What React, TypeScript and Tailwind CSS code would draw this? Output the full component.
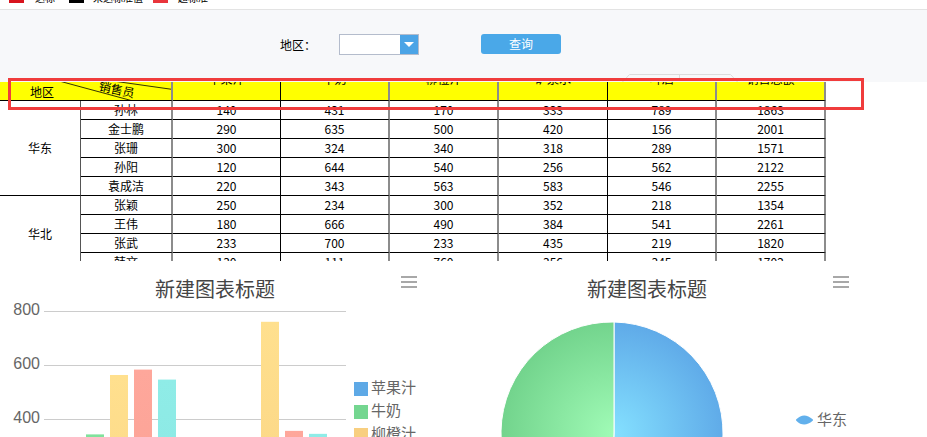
import React from 'react';

const products = ['苹果汁', '牛奶', '柳橙汁', '矿泉水', '啤酒', '销售总额'];

const east = [
    ['孙林', 140, 431, 170, 333, 789, 1863],
    ['金士鹏', 290, 635, 500, 420, 156, 2001],
    ['张珊', 300, 324, 340, 318, 289, 1571],
    ['孙阳', 120, 644, 540, 256, 562, 2122],
    ['袁成洁', 220, 343, 563, 583, 546, 2255],
];
const north = [
    ['张颖', 250, 234, 300, 352, 218, 1354],
    ['王伟', 180, 666, 490, 384, 541, 2261],
    ['张武', 233, 700, 233, 435, 219, 1820],
    ['韩文', 130, 111, 760, 356, 345, 1702],
];

// right border per column (the scaled report draws some lines grey, some black)
const colBorder = [
    'border-r border-r-[#555]',
    'border-r-2 border-r-[#8c8c8c]',
    'border-r border-r-black',
    'border-r-2 border-r-[#8c8c8c]',
    'border-r-2 border-r-[#8c8c8c]',
    'border-r border-r-black',
    'border-r-2 border-r-[#8c8c8c]',
    'border-r-2 border-r-[#8c8c8c]',
];

const BodyRows: React.FC<{ region: string; rows: (string | number)[][] }> = ({ region, rows }) => (
    <>
        {rows.map((r, i) => (
            <React.Fragment key={String(r[0])}>
                {i === 0 && (
                    <div
                        className={`flex items-center justify-center border-b border-b-black ${colBorder[0]}`}
                        style={{ gridRow: `span ${rows.length} / span ${rows.length}` }}
                    >
                        {region}
                    </div>
                )}
                {r.map((v, j) => (
                    <div key={j} className={`h-[19px] flex items-center justify-center border-b border-b-black ${colBorder[j + 1]}`}>
                        {v}
                    </div>
                ))}
            </React.Fragment>
        ))}
    </>
);

const MenuIcon: React.FC<{ x: number }> = ({ x }) => (
    <g stroke="#a8a8a8" strokeWidth={2}>
        <line x1={x} y1={15} x2={x + 16} y2={15} />
        <line x1={x} y1={20} x2={x + 16} y2={20} />
        <line x1={x} y1={25} x2={x + 16} y2={25} />
    </g>
);

const seriesColors = [
    ['#68b6f0', '#5ea9e6'],
    ['#80e29c', '#74d690'],
    ['#ffe08e', '#f8cf80'],
    ['#fea79b', '#f99d90'],
    ['#8fece7', '#86e2de'],
];

const BarChart = () => {
    const cats = [
        [220, 343, 563, 583, 546],
        [130, 111, 760, 356, 345],
    ];
    const y = (v: number) => 157 - (v - 400) * 0.27;
    return (
        <svg width={463} height={176} className="shrink-0" fontFamily="'Noto Sans CJK SC', sans-serif">
            <defs>
                {seriesColors.map((c, i) => (
                    <linearGradient key={i} id={`bar${i}`} x1="0" y1="0" x2="0" y2="1">
                        <stop offset="0" stopColor={c[0]} />
                        <stop offset="1" stopColor={c[1]} />
                    </linearGradient>
                ))}
            </defs>
            <text x={215} y={35} textAnchor="middle" fontSize={20} fill="#444">新建图表标题</text>
            <MenuIcon x={401} />
            {[49, 103, 157].map(g => (
                <line key={g} x1={44} x2={346} y1={g + 0.5} y2={g + 0.5} stroke="#cccccc" />
            ))}
            {[['800', 49], ['600', 103], ['400', 157]].map(([t, g]) => (
                <text key={t} x={40} y={Number(g) + 4} textAnchor="end" fontSize={16} fill="#666" fontFamily="'Liberation Sans', sans-serif">{t}</text>
            ))}
            {cats.map((vals, c) =>
                vals.map((v, s) => (
                    <rect key={`${c}-${s}`} x={62 + 151 * c + 24 * s} y={y(v)} width={18} height={300} fill={`url(#bar${s})`} />
                ))
            )}
            {['苹果汁', '牛奶', '柳橙汁'].map((t, i) => (
                <g key={t}>
                    <rect x={354} y={120 + 23 * i} width={14} height={14} fill={seriesColors[i][1]} />
                    <text x={371} y={131 + 23 * i} fontSize={15} fill="#666">{t}</text>
                </g>
            ))}
        </svg>
    );
};

const PieChart = () => (
    <svg width={464} height={176} className="shrink-0" fontFamily="'Noto Sans CJK SC', sans-serif">
        <defs>
            <radialGradient id="pieBlue" cx={151} cy={171} r={111} gradientUnits="userSpaceOnUse">
                <stop offset="0" stopColor="#84e0ff" />
                <stop offset="1" stopColor="#5faae8" />
            </radialGradient>
            <radialGradient id="pieGreen" cx={151} cy={171} r={111} gradientUnits="userSpaceOnUse">
                <stop offset="0" stopColor="#a0fbb6" />
                <stop offset="1" stopColor="#73d48d" />
            </radialGradient>
        </defs>
        <text x={184} y={35} textAnchor="middle" fontSize={20} fill="#444">新建图表标题</text>
        <MenuIcon x={370} />
        <path d="M151,171 L151,60 A111,111 0 1 1 147,282 Z" fill="url(#pieBlue)" stroke="#fff" strokeWidth={1} />
        <path d="M151,171 L147,282 A111,111 0 0 1 151,60 Z" fill="url(#pieGreen)" stroke="#fff" strokeWidth={1} />
        <path d="M334,158 Q341,151 349,158 Q341,165 334,158 Z" fill="#62b0ec" stroke="#62b0ec" strokeWidth={2} strokeLinejoin="round" />
        <text x={354} y={163} fontSize={15} fill="#666">华东</text>
    </svg>
);

export default function App() {
    return (
        <div className="relative w-[927px] h-[437px] overflow-hidden bg-white text-black font-['Noto_Sans_CJK_SC','Liberation_Sans',sans-serif]">
            {/* legend strip, mostly scrolled out of view */}
            <div className="h-[10px] overflow-hidden border-b border-b-[#e3e3e3] bg-white">
                <div className="flex items-center -mt-[8px] pl-[9px] text-[10px] leading-[11px]">
                    <div className="flex items-center w-[60px]">
                        <span className="w-[15px] h-[11px] bg-[#d8141e]" />
                        <span className="ml-[11px]">达标</span>
                    </div>
                    <div className="flex items-center w-[84px]">
                        <span className="w-[15px] h-[11px] bg-black" />
                        <span className="ml-[9px]">未达标准值</span>
                    </div>
                    <div className="flex items-center">
                        <span className="w-[15px] h-[11px] bg-[#e9353c]" />
                        <span className="ml-[10px]">超标准</span>
                    </div>
                </div>
            </div>

            {/* filter panel */}
            <div className="relative z-10 h-[72px] bg-[#f7f8fa] pt-[24px] pl-[280px] flex items-start text-[12px]">
                <span className="h-[21px] leading-[21px] w-[36px]">地区：</span>
                <div className="ml-[23px] w-[80px] h-[21px] flex border border-[#b4bccc] bg-white">
                    <div className="flex-1" />
                    <div className="w-[18px] bg-[#4ba4e6] flex items-center justify-center">
                        <span className="w-0 h-0 border-l-[5px] border-r-[5px] border-t-[5px] border-l-transparent border-r-transparent border-t-white" />
                    </div>
                </div>
                <button className="ml-[62px] w-[80px] h-[20px] rounded-[3px] bg-[#4aa8e8] text-white text-[12px] leading-[20px]">查询</button>
                <svg className="absolute left-[622px] bottom-0" width={116} height={8}>
                    <path d="M0.5,8 L7.5,0.5 L108.5,0.5 L115.5,8 M57.5,0.5 L57.5,4" fill="none" stroke="#dcdcdc" />
                </svg>
            </div>

            {/* report table, header slides under the panel */}
            <div className="-mt-[17px] h-[196px] overflow-hidden text-[12px]">
                <div className="grid grid-cols-[81px_92px_108px_109px_109px_109px_109px_109px] w-[826px]">
                    <div className="relative col-span-2 h-[36px] bg-[#ffff00] border-b border-b-black border-r-2 border-r-[#8c8c8c]">
                        <svg className="absolute inset-0" width={171} height={35}>
                            <line x1={0} y1={0} x2={133} y2={36} stroke="#000" strokeWidth={0.8} />
                            <line x1={0} y1={0} x2={173} y2={24.5} stroke="#000" strokeWidth={0.8} />
                        </svg>
                        <span className="absolute left-[30px] top-[20px] leading-[14px]">地区</span>
                        <span className="absolute left-[99px] top-[17px] leading-[14px] rotate-[12deg] origin-center">销售员</span>
                        <span className="absolute left-[140px] top-[1px] leading-[14px]">产品</span>
                    </div>
                    {products.map((p, i) => (
                        <div key={p} className={`h-[36px] pb-[8px] bg-[#ffff00] flex items-center justify-center border-b border-b-black ${colBorder[i + 2]}`}>
                            {p}
                        </div>
                    ))}
                    <BodyRows region="华东" rows={east} />
                    <BodyRows region="华北" rows={north} />
                </div>
            </div>

            {/* charts */}
            <div className="mt-[1px] flex h-[176px]">
                <BarChart />
                <PieChart />
            </div>

            {/* annotation box */}
            <div className="absolute left-[8px] top-[78px] w-[856px] h-[32px] border-[3px] border-[#f03c3c] z-20 pointer-events-none" />
        </div>
    );
}
